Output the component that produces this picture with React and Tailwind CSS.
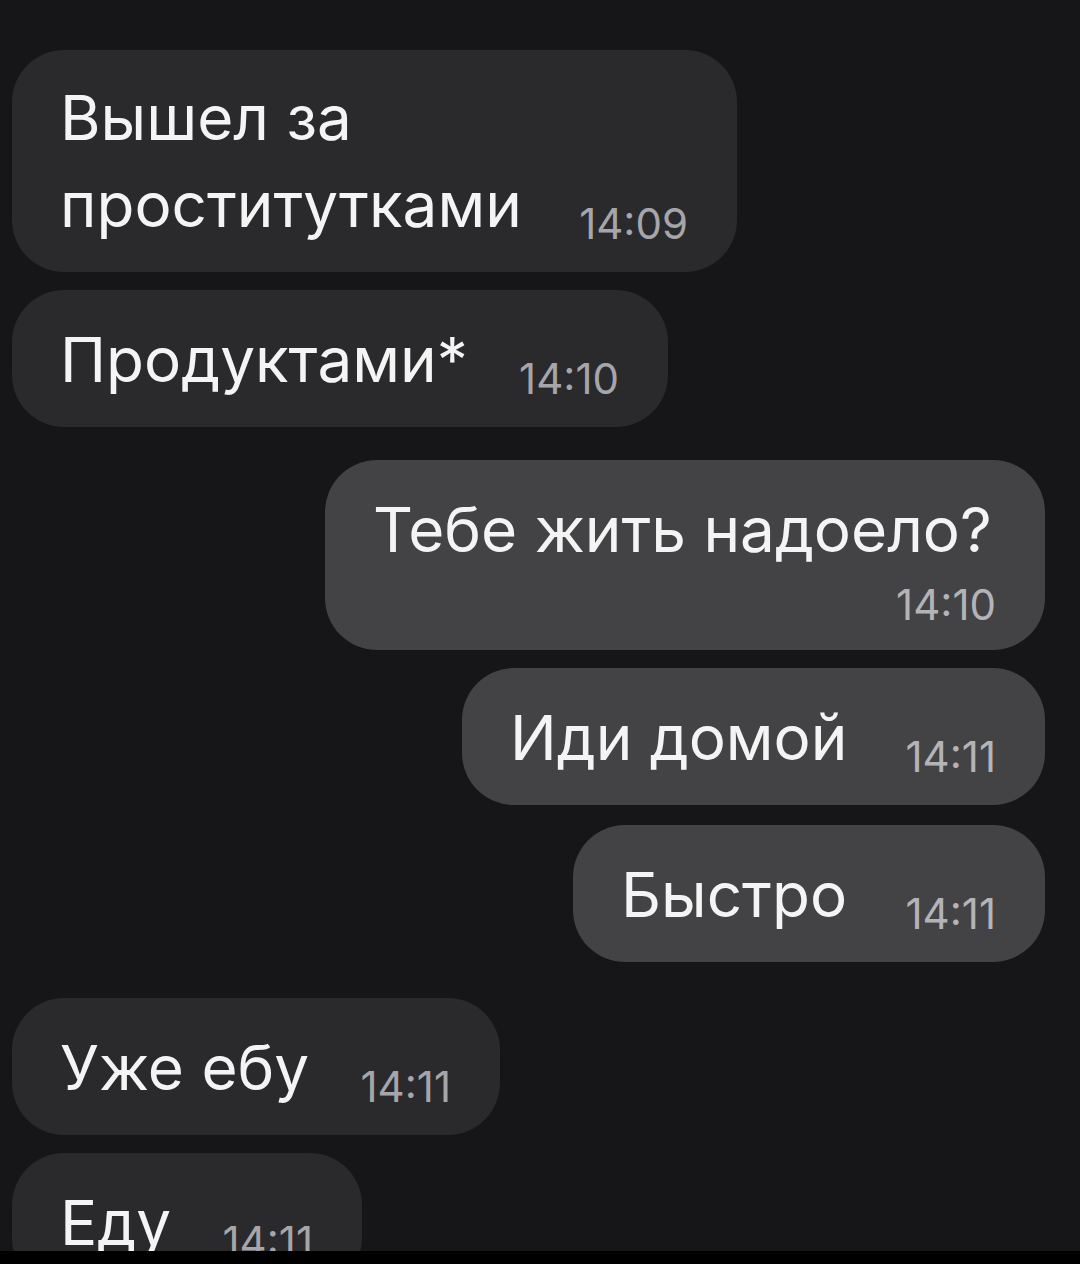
import React from "react";

const FONT = { fontFamily: "Inter, 'Noto Sans', 'Liberation Sans', sans-serif" };

function Time({ children, out }) {
  return (
    <div
      className={
        "text-[42px] leading-[42px] shrink-0 " +
        (out ? "text-[#b4b4b8]" : "text-[#a6a6aa]")
      }
    >
      {children}
    </div>
  );
}

function Bubble({ out, className, children, time, stacked, pt = "pt-[26px]" }) {
  const base =
    "rounded-[52px] pl-[48px] pr-[49px] text-[#f4f4f4] " +
    (out ? "bg-[#434346] self-end " : "bg-[#2a2a2d] self-start ") +
    className;
  if (stacked) {
    return (
      <div className={base + " flex flex-col pt-[26px] pb-[24px]"}>
        <div className="text-[62px] leading-[87px] whitespace-nowrap">{children}</div>
        <div className="flex justify-end mt-[11px]">
          <Time out={out}>{time}</Time>
        </div>
      </div>
    );
  }
  return (
    <div className={base + " flex items-end justify-between pb-[24px] " + pt}>
      <div className="text-[62px] leading-[87px] whitespace-nowrap">{children}</div>
      <div className="mb-[3px]">
        <Time out={out}>{time}</Time>
      </div>
    </div>
  );
}

export default function App() {
  return (
    <div className="w-[1080px] h-[1264px] flex flex-col bg-black" style={FONT}>
      <div className="h-[1251px] overflow-hidden bg-[#161618] flex flex-col pt-[50px] pl-[12px] pr-[35px]">
        <Bubble className="w-[725px]" time="14:09" pt="pt-[24px]">
          <div>Вышел за</div>
          <div>проститутками</div>
        </Bubble>
        <Bubble className="w-[656px] mt-[18px]" time="14:10">
          Продуктами*
        </Bubble>
        <Bubble out stacked className="w-[720px] mt-[33px]" time="14:10">
          Тебе жить надоело?
        </Bubble>
        <Bubble out className="w-[583px] mt-[18px]" time="14:11">
          Иди домой
        </Bubble>
        <Bubble out className="w-[472px] mt-[20px]" time="14:11">
          Быстро
        </Bubble>
        <Bubble className="w-[488px] mt-[36px]" time="14:11">
          Уже ебу
        </Bubble>
        <Bubble className="w-[350px] mt-[18px] shrink-0" time="14:11">
          Еду
        </Bubble>
      </div>
      <div className="h-[13px] bg-black" />
    </div>
  );
}
